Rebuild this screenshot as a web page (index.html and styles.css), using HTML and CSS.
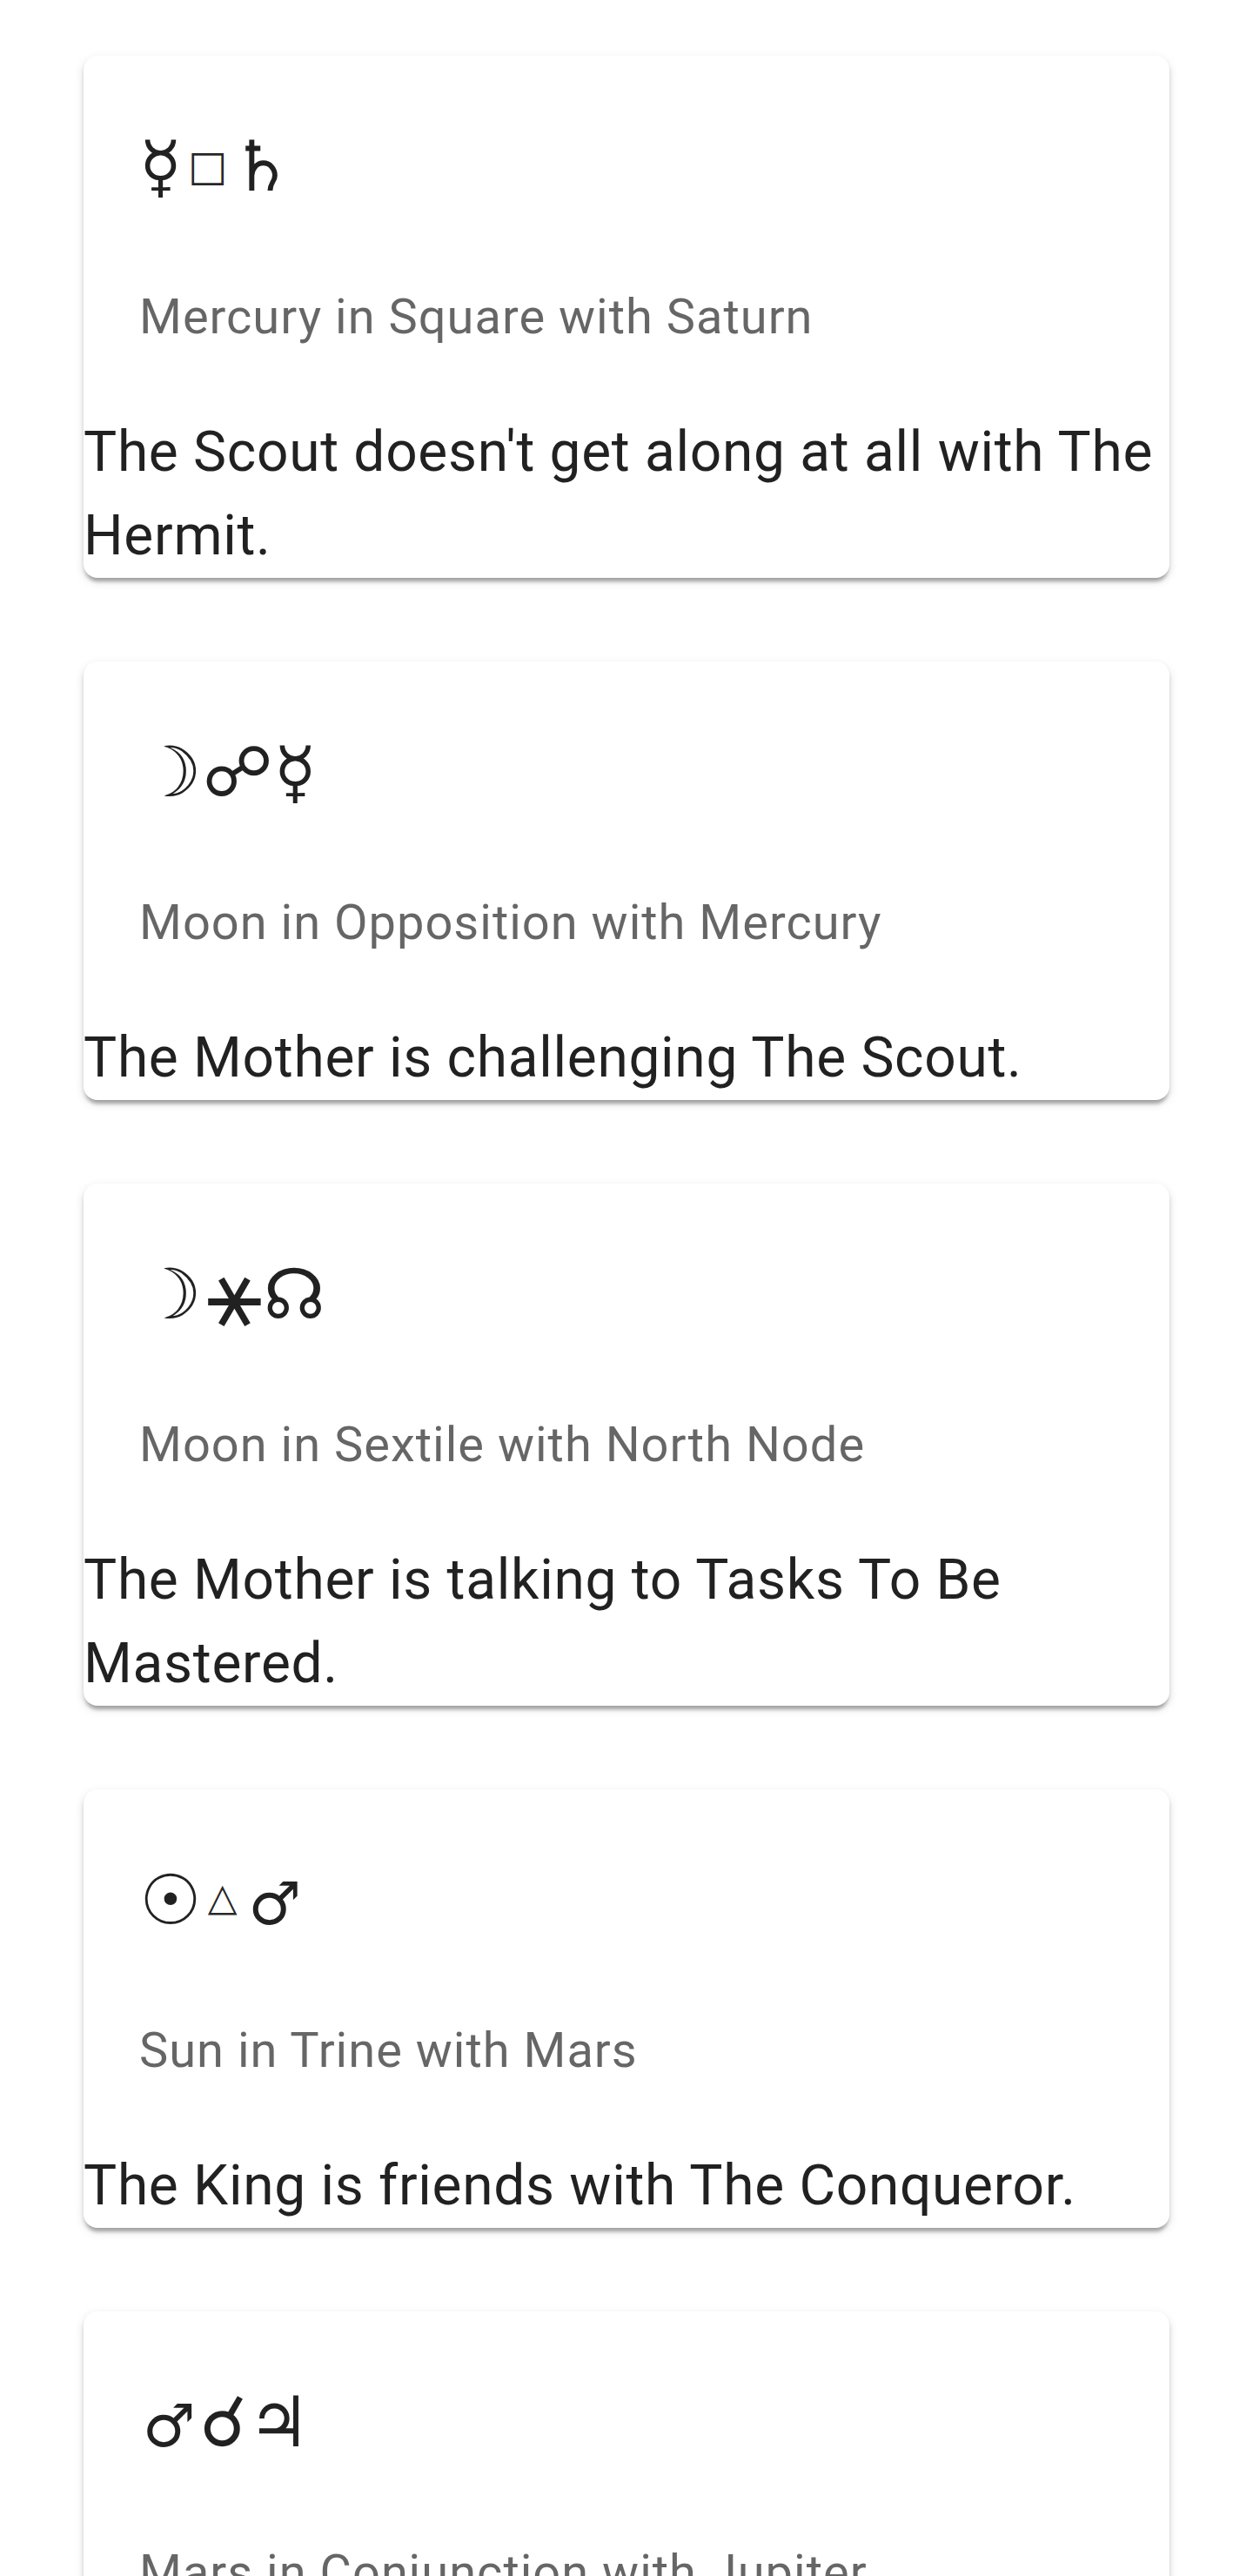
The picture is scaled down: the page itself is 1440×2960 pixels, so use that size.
FILE: index.html
```html
<!DOCTYPE html>
<html lang="en">
<head>
<meta charset="utf-8">
<title>Aspects</title>
<link rel="stylesheet" href="styles.css">
</head>
<body>
<main class="aspect-list">
  <section class="card">
    <div class="card-primary">
      <h2 class="card-title">☿<span class="aspect aspect-square">□</span>♄</h2>
      <h3 class="card-subtitle">Mercury in Square with Saturn</h3>
    </div>
    <div class="card-body">The Scout doesn't get along at all with The Hermit.</div>
  </section>
  <section class="card">
    <div class="card-primary">
      <h2 class="card-title">☽<span class="aspect aspect-opposition">☍</span>☿</h2>
      <h3 class="card-subtitle">Moon in Opposition with Mercury</h3>
    </div>
    <div class="card-body">The Mother is challenging The Scout.</div>
  </section>
  <section class="card">
    <div class="card-primary">
      <h2 class="card-title">☽<span class="aspect aspect-sextile">⚹</span>☊</h2>
      <h3 class="card-subtitle">Moon in Sextile with North Node</h3>
    </div>
    <div class="card-body">The Mother is talking to Tasks To Be Mastered.</div>
  </section>
  <section class="card">
    <div class="card-primary">
      <h2 class="card-title">☉<span class="aspect aspect-trine">△</span><span class="planet-mars">♂</span></h2>
      <h3 class="card-subtitle">Sun in Trine with Mars</h3>
    </div>
    <div class="card-body">The King is friends with The Conqueror.</div>
  </section>
  <section class="card">
    <div class="card-primary">
      <h2 class="card-title"><span class="planet-mars">♂</span><span class="aspect aspect-conjunction">☌</span>♃</h2>
      <h3 class="card-subtitle">Mars in Conjunction with Jupiter</h3>
    </div>
  </section>
</main>
</body>
</html>
```
FILE: styles.css
```css
html, body {
  margin: 0;
  padding: 0;
  background: #ffffff;
}

body {
  font-family: Roboto, "DejaVu Sans", sans-serif;
  color: rgba(0, 0, 0, 0.87);
}

.aspect-list {
  display: flex;
  flex-direction: column;
  gap: 96px;
  padding: 64px 96px;
}

.card {
  background: #ffffff;
  border-radius: 16px;
  box-shadow: 0 8px 4px -4px rgba(0, 0, 0, 0.2),
              0 4px 4px 0 rgba(0, 0, 0, 0.14),
              0 4px 12px 0 rgba(0, 0, 0, 0.12);
  display: flex;
  flex-direction: column;
}

.card-primary {
  padding: 64px;
  display: flex;
  flex-direction: column;
  gap: 64px;
}

.card-title {
  margin: 0;
  font-family: Roboto, "DejaVu Sans", sans-serif;
  font-size: 80px;
  line-height: 128px;
  font-weight: 400;
  letter-spacing: 1px;
  color: rgba(0, 0, 0, 0.87);
}

.aspect {
  line-height: 0;
}

.aspect-square {
  font-size: 48px;
  vertical-align: 12px;
  margin: 0 2px 0 6px;
}

.aspect-trine {
  font-size: 44px;
  vertical-align: 16px;
  margin: 0 8px 0 6px;
}

.aspect-sextile {
  font-size: 108px;
  vertical-align: -8px;
  margin-left: 4px;
}

.aspect-conjunction {
  margin-left: 4px;
}

.planet-mars {
  font-size: 68px;
  line-height: 0;
  margin-left: 4px;
}

.card-subtitle {
  margin: 0;
  font-size: 56px;
  line-height: 88px;
  font-weight: 400;
  letter-spacing: 1px;
  color: rgba(0, 0, 0, 0.6);
}

.card-body {
  font-size: 64px;
  line-height: 96px;
  letter-spacing: 0.7px;
  color: rgba(0, 0, 0, 0.87);
}
```
